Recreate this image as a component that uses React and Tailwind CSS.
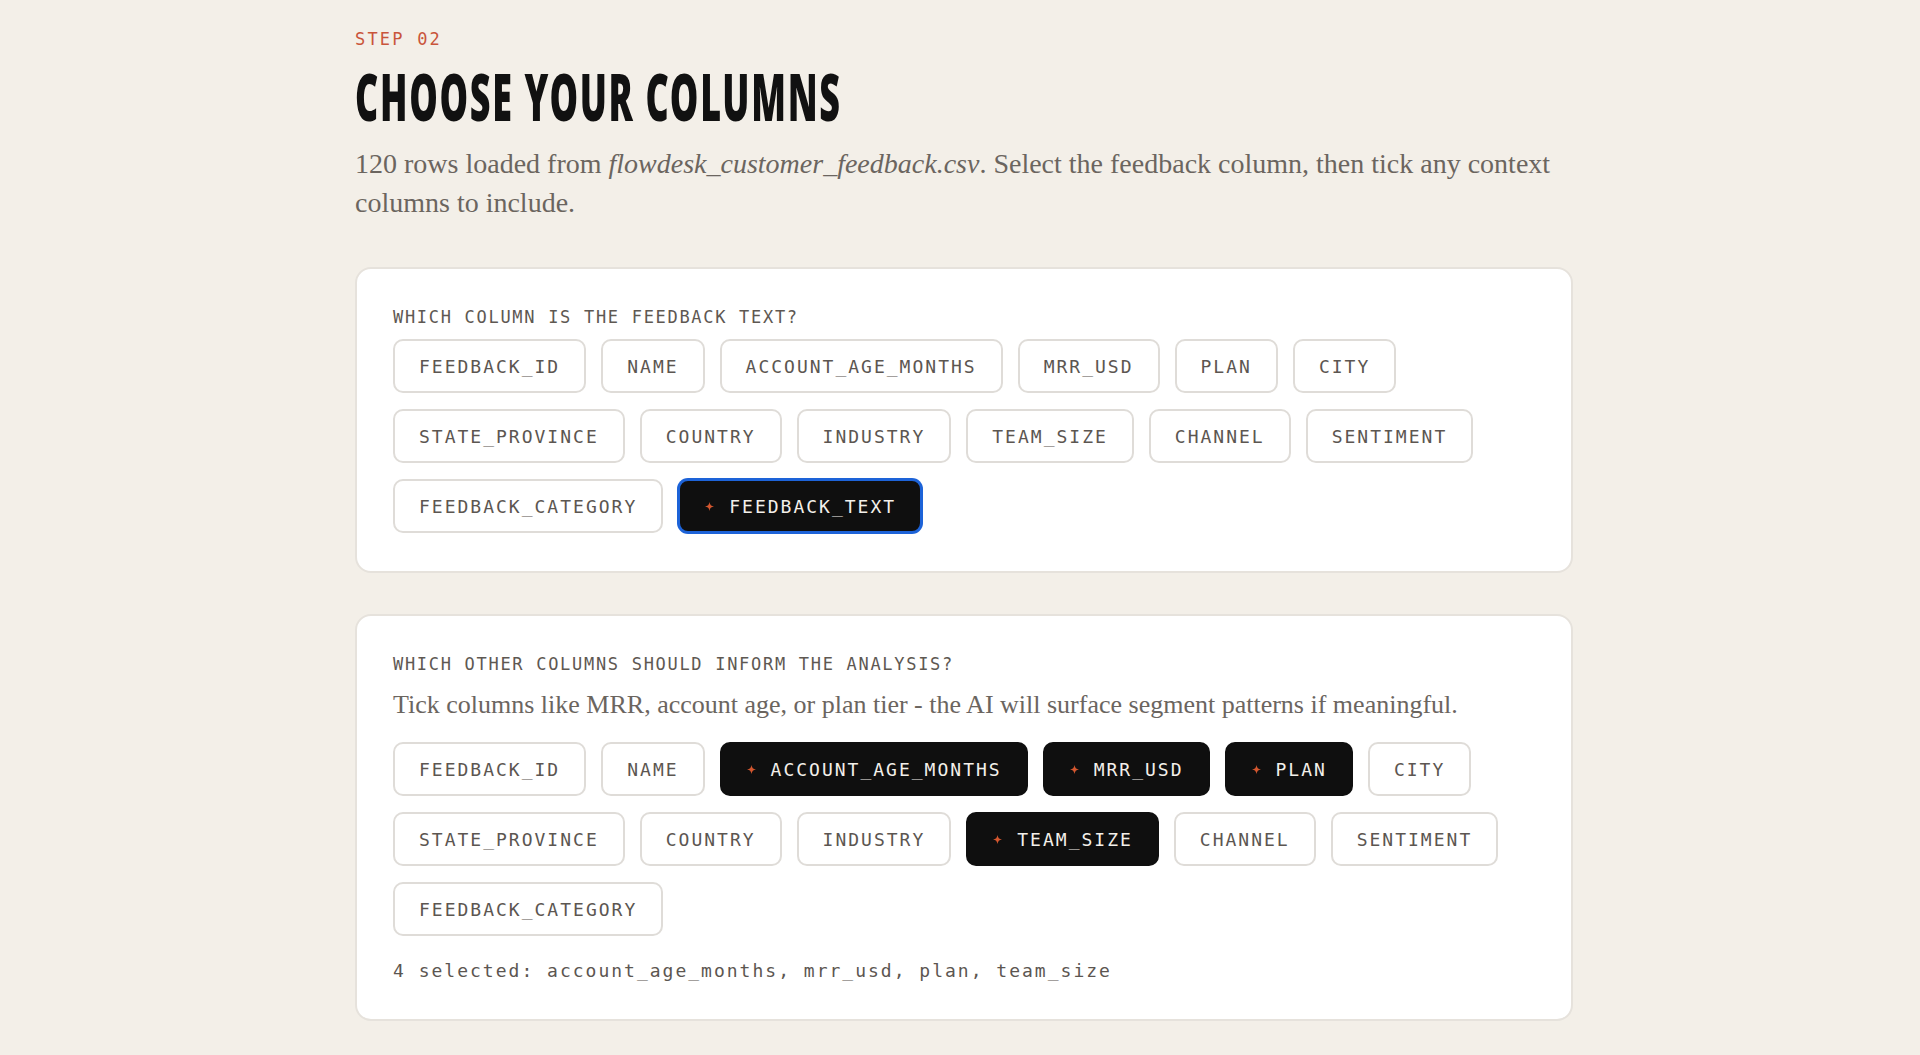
import React, { useState } from 'react'

const COLUMNS = [
    'feedback_id',
    'name',
    'account_age_months',
    'mrr_usd',
    'plan',
    'city',
    'state_province',
    'country',
    'industry',
    'team_size',
    'channel',
    'sentiment',
    'feedback_category',
    'feedback_text',
]

const mono = "font-['DejaVu_Sans_Mono','Liberation_Mono',monospace]"
const serif = "font-['Liberation_Serif','DejaVu_Serif',serif]"

function Spark() {
    return (
        <svg viewBox="0 0 8 8" className="ml-[1px] h-[9px] w-[9px] shrink-0" aria-hidden="true">
            <path
                d="M4 0C4.4 2.6 5.4 3.6 8 4C5.4 4.4 4.4 5.4 4 8C3.6 5.4 2.6 4.4 0 4C2.6 3.6 3.6 2.6 4 0Z"
                fill="#d4572f"
            />
        </svg>
    )
}

function ColumnChip({ name, selected, focused, onClick }) {
    const base = `flex h-[54px] items-center gap-[15px] rounded-[10px] border-2 px-6 text-[18px] uppercase tracking-[2px] ${mono}`
    const look = selected
        ? focused
            ? 'border-[#1d63d8] bg-[#0f0f0f] text-[#f3f0ea] ring-1 ring-[#1d63d8]'
            : 'border-[#0f0f0f] bg-[#0f0f0f] text-[#f3f0ea]'
        : 'border-[#dfdcd8] bg-white text-[#5c5651]'

    return (
        <button type="button" onClick={onClick} className={`${base} ${look}`}>
            {selected && <Spark />}
            <span>{name}</span>
        </button>
    )
}

export default function App() {
    const [feedbackCol, setFeedbackCol] = useState('feedback_text')
    const [context, setContext] = useState(['account_age_months', 'mrr_usd', 'plan', 'team_size'])

    const toggleContext = (col) => {
        setContext((prev) =>
            prev.includes(col) ? prev.filter((c) => c !== col) : [...prev, col]
        )
    }

    const contextOptions = COLUMNS.filter((c) => c !== feedbackCol)
    const picked = contextOptions.filter((c) => context.includes(c))

    return (
        <div className="min-h-screen bg-[#f3efe8] pt-[27px] pb-10">
            <div className="ml-[355px] w-[1218px]">
                <p className={`text-[17px] leading-[24px] tracking-[2.2px] text-[#c9553b] ${mono}`}>
                    STEP 02
                </p>
                {/* condensed display heading */}
                <h1 className="mt-[11px] origin-left scale-x-[0.553] whitespace-nowrap font-['Noto_Sans','Liberation_Sans',sans-serif] text-[65px] leading-[68px] font-black tracking-[3px] text-[#111111]">
                    CHOOSE YOUR COLUMNS
                </h1>
                <p className={`mt-[14px] text-[28px] leading-[39px] text-[#6b655f] ${serif}`}>
                    120 rows loaded from <em>flowdesk_customer_feedback.csv</em>. Select the feedback column, then tick any context columns to include.
                </p>

                {/* Feedback column picker */}
                <section className="mt-[45px] rounded-[16px] border-2 border-[#e6e2dc] bg-white px-9 pt-9 pb-[38px]">
                    <h2 className={`mb-[10px] text-[17px] leading-[24px] tracking-[1.7px] text-[#5e5852] ${mono}`}>
                        WHICH COLUMN IS THE FEEDBACK TEXT?
                    </h2>
                    <div className="flex flex-wrap gap-x-[15px] gap-y-4">
                        {COLUMNS.map((col) => (
                            <ColumnChip
                                key={col}
                                name={col}
                                selected={col === feedbackCol}
                                focused
                                onClick={() => setFeedbackCol(col)}
                            />
                        ))}
                    </div>
                </section>

                {/* Context columns */}
                <section className="mt-[41px] rounded-[16px] border-2 border-[#e6e2dc] bg-white p-9">
                    <h2 className={`text-[17px] leading-[24px] tracking-[1.7px] text-[#5e5852] ${mono}`}>
                        WHICH OTHER COLUMNS SHOULD INFORM THE ANALYSIS?
                    </h2>
                    <p className={`mt-[11px] text-[26px] leading-[36px] text-[#6b655f] ${serif}`}>
                        Tick columns like MRR, account age, or plan tier - the AI will surface segment patterns if meaningful.
                    </p>
                    <div className="mt-[19px] flex flex-wrap gap-x-[15px] gap-y-4">
                        {contextOptions.map((col) => (
                            <ColumnChip
                                key={col}
                                name={col}
                                selected={context.includes(col)}
                                onClick={() => toggleContext(col)}
                            />
                        ))}
                    </div>
                    <p className={`mt-[22px] text-[18px] leading-[25px] tracking-[2px] text-[#5c5651] ${mono}`}>
                        {picked.length} selected: {picked.join(', ')}
                    </p>
                </section>
            </div>
        </div>
    )
}
